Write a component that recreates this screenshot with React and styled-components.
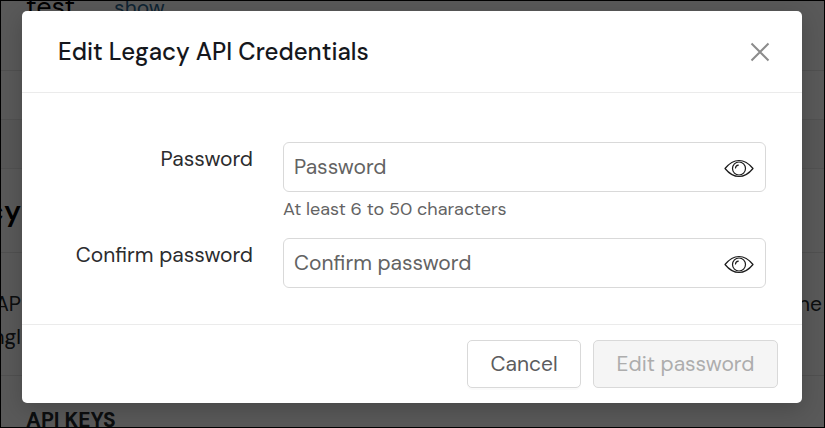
import React, { useState } from "react";
import styled, { createGlobalStyle } from "styled-components";

const GlobalStyle = createGlobalStyle`
  *, *::before, *::after { box-sizing: border-box; }
  body {
    margin: 0;
    background: #fff;
    color: #23282d;
    font-family: "DM Sans", Roboto, "Liberation Sans", sans-serif;
    font-size: 21px;
  }
  button, input { font: inherit; }
`;

const Screen = styled.div`
  position: relative;
  height: 100vh;
  overflow: hidden;
  border: 1px solid #000;
`;

const Page = styled.main`
  background: #f9f9f9;
`;

const Card = styled.section`
  background: #fff;
  border-bottom: 1px solid #e8e8e8;
`;

const TopRow = styled.div`
  display: flex;
  align-items: center;
  gap: 39px;
  height: 70px;
  padding: 0 25px 58px;
  border-bottom: 1px solid #e4e4e4;
`;

const AccountName = styled.span`
  font-size: 27px;
  color: #000;
`;

const ShowLink = styled.a`
  padding-top: 3px;
  color: #2a6590;
  text-decoration: none;
`;

const EmptyRow = styled.div`
  height: 48px;
`;

const LowerCard = styled(Card)`
  margin-top: 48px;
  border-top: 1px solid #e8e8e8;
`;

const SectionTitle = styled.h2`
  display: flex;
  align-items: center;
  justify-content: flex-end;
  width: 20px;
  height: 83px;
  margin: 0;
  font-size: 29px;
  font-weight: 600;
  color: #000;
`;

const Description = styled.div`
  height: 124px;
  padding-top: 35px;
  border-top: 1px solid #e4e4e4;
  border-bottom: 1px solid #e4e4e4;
  line-height: 33px;
`;

const TextLine = styled.div`
  display: flex;
  justify-content: space-between;
  padding-right: 2px;
`;

const Fragment = styled.span`
  display: flex;
  justify-content: flex-end;
  width: 20px;
`;

const KeysTitle = styled.h3`
  margin: 0;
  padding: 27px 25px;
  font-size: 21px;
  line-height: 34px;
  font-weight: 700;
`;

const Overlay = styled.div`
  position: absolute;
  inset: 0;
  padding: 10px 22px 23px 21px;
  background: rgba(0, 0, 0, 0.65);
`;

const Dialog = styled.div`
  background: #fff;
  border-radius: 5px;
  box-shadow: 0 6px 22px rgba(0, 0, 0, 0.2);
`;

const Header = styled.header`
  display: flex;
  align-items: center;
  justify-content: space-between;
  height: 82px;
  padding: 0 32px 0 36px;
  border-bottom: 1px solid #ebebeb;
`;

const Title = styled.h1`
  margin: 0;
  font-size: 24px;
  font-weight: 500;
  line-height: 32px;
  color: #15171c;
`;

const IconButton = styled.button`
  display: flex;
  padding: 0;
  border: 0;
  background: transparent;
  color: ${(p) => p.$color};
  cursor: pointer;
`;

const Form = styled.div`
  display: grid;
  grid-template-columns: 195px minmax(0, 1fr);
  column-gap: 30px;
  padding: 49px 36px 36px;
`;

const Label = styled.label`
  padding-top: 2px;
  line-height: 30px;
  text-align: right;
  color: #2c2c2e;
`;

const InputBox = styled.div`
  display: flex;
  align-items: center;
  height: 50px;
  padding: 0 11px 0 10px;
  border: 1px solid #d9d9d9;
  border-radius: 6px;
`;

const Input = styled.input`
  flex: 1;
  min-width: 0;
  height: 48px;
  padding: 0;
  border: 0;
  outline: 0;
  background: transparent;
  color: #2c2c2e;
  &::placeholder { color: #636363; opacity: 1; }
`;

const Hint = styled.p`
  margin: 0;
  padding: 4px 0 16px;
  font-size: 18px;
  line-height: 26px;
  color: #636363;
`;

const Footer = styled.footer`
  display: flex;
  justify-content: flex-end;
  gap: 12px;
  padding: 15px 24px;
  border-top: 1px solid #ebebeb;
`;

const Button = styled.button`
  height: 48px;
  min-width: ${(p) => (p.$wide ? "185px" : "114px")};
  padding: 0 22px;
  border: 1px solid #d9d9d9;
  border-radius: 5px;
  background: #fff;
  color: #5c5c5e;
  box-shadow: 0 2px 0 rgba(0, 0, 0, 0.02);
  cursor: pointer;
  &:disabled {
    background: #f5f5f5;
    color: #adadad;
    box-shadow: none;
    cursor: default;
  }
`;

function CloseIcon() {
  return (
    <svg width="20" height="20" viewBox="0 0 20 20" fill="none" stroke="currentColor" strokeWidth="2" aria-hidden="true">
      <path d="M1.500 1.500 18.500 18.500M18.500 1.500 1.500 18.500" />
    </svg>
  );
}

function EyeIcon() {
  return (
    <svg width="30" height="22" viewBox="0 0 30 22" fill="none" stroke="currentColor" strokeWidth="1.200" strokeLinejoin="round" strokeLinecap="round" aria-hidden="true">
      <path d="M1 12.500C5.500 7 9.800 4.500 15 4.500S24.500 7 29 12.500C24.500 18 20.200 20.500 15 20.500S5.500 18 1 12.500Z" />
      <circle cx="15" cy="12.500" r="6.500" />
      <path d="M11.500 12C11.700 10.400 12.800 9.400 14.300 9.200" />
    </svg>
  );
}

function PasswordField({ id, label, hint }) {
  const [visible, setVisible] = useState(false);
  return (
    <>
      <Label htmlFor={id}>{label}</Label>
      <div>
        <InputBox>
          <Input id={id} type={visible ? "text" : "password"} placeholder={label} />
          <IconButton type="button" $color="#1c1c1c" aria-label={`Show ${label}`} onClick={() => setVisible(!visible)}>
            <EyeIcon />
          </IconButton>
        </InputBox>
        {hint && <Hint>{hint}</Hint>}
      </div>
    </>
  );
}

export default function App() {
  return (
    <Screen>
      <GlobalStyle />
      <Page>
        <Card>
          <TopRow>
            <AccountName>test</AccountName>
            <ShowLink href="#show">show</ShowLink>
          </TopRow>
          <EmptyRow />
        </Card>
        <LowerCard>
          <SectionTitle>cy</SectionTitle>
          <Description>
            <TextLine>
              <Fragment>AP</Fragment>
              <span>ne</span>
            </TextLine>
            <TextLine>
              <Fragment>ngl</Fragment>
            </TextLine>
          </Description>
          <KeysTitle>API KEYS</KeysTitle>
        </LowerCard>
      </Page>
      <Overlay>
        <Dialog role="dialog" aria-modal="true" aria-labelledby="dialog-title">
          <Header>
            <Title id="dialog-title">Edit Legacy API Credentials</Title>
            <IconButton type="button" $color="#8c8c8c" aria-label="Close">
              <CloseIcon />
            </IconButton>
          </Header>
          <Form>
            <PasswordField id="password" label="Password" hint="At least 6 to 50 characters" />
            <PasswordField id="confirm" label="Confirm password" />
          </Form>
          <Footer>
            <Button type="button">Cancel</Button>
            <Button type="button" $wide disabled>Edit password</Button>
          </Footer>
        </Dialog>
      </Overlay>
    </Screen>
  );
}
